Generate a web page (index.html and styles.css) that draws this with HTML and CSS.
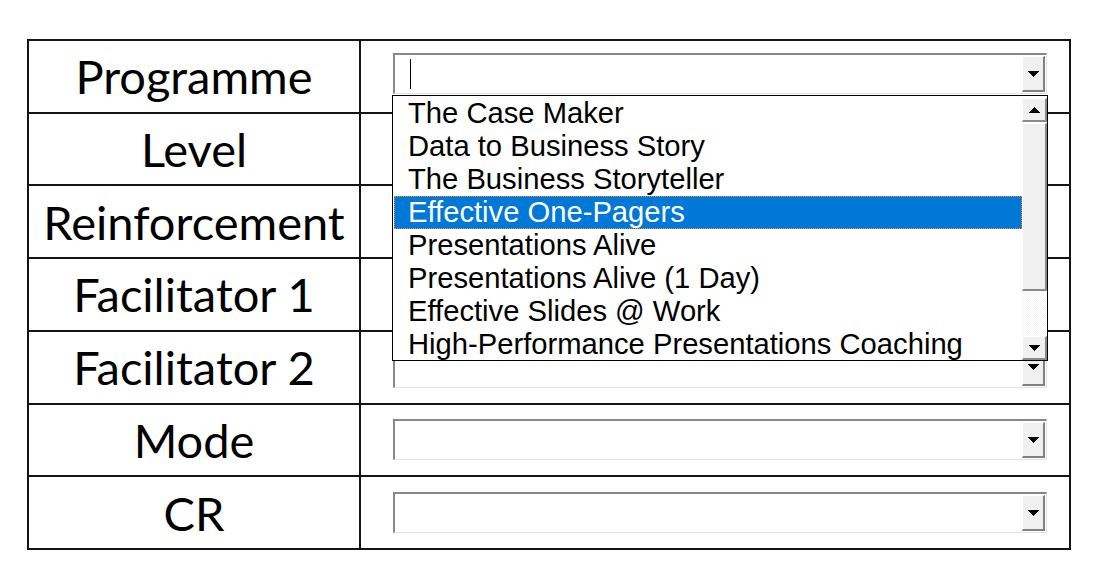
FILE: index.html
```html
<!DOCTYPE html>
<html>
	<head>
		<meta charset="utf-8">
		<title>Programme form</title>
		<link rel="stylesheet" href="styles.css">
	</head>
	<body>
		<!-- Form grid: labels left, combo boxes right -->
		<div class="form">
			<div class="label">Programme</div>
			<div class="cell first">
				<div class="combo open">
					<div class="field"><span class="caret"></span></div>
					<span class="drop-btn"><svg width="11" height="6" viewBox="0 0 11 6" shape-rendering="crispEdges"><polygon points="0,0 11,0 5.5,6" fill="#000"/></svg></span>
					<!-- Open list -->
					<div class="list">
						<div class="items">
							<div class="item">The Case Maker</div>
							<div class="item">Data to Business Story</div>
							<div class="item">The Business Storyteller</div>
							<div class="item selected">Effective One-Pagers</div>
							<div class="item">Presentations Alive</div>
							<div class="item">Presentations Alive (1 Day)</div>
							<div class="item">Effective Slides @ Work</div>
							<div class="item">High-Performance Presentations Coaching</div>
						</div>
						<div class="scrollbar">
							<span class="sb-btn"><svg width="11" height="6" viewBox="0 0 11 6" shape-rendering="crispEdges"><polygon points="0,6 11,6 5.5,0" fill="#000"/></svg></span>
							<span class="sb-thumb"></span>
							<span class="sb-track"></span>
							<span class="sb-btn"><svg width="11" height="6" viewBox="0 0 11 6" shape-rendering="crispEdges"><polygon points="0,0 11,0 5.5,6" fill="#000"/></svg></span>
						</div>
					</div>
				</div>
			</div>

			<div class="label">Level</div>
			<div class="cell">
				<div class="combo"><div class="field"></div><span class="drop-btn"><svg width="11" height="6" viewBox="0 0 11 6" shape-rendering="crispEdges"><polygon points="0,0 11,0 5.5,6" fill="#000"/></svg></span></div>
			</div>

			<div class="label">Reinforcement</div>
			<div class="cell">
				<div class="combo"><div class="field"></div><span class="drop-btn"><svg width="11" height="6" viewBox="0 0 11 6" shape-rendering="crispEdges"><polygon points="0,0 11,0 5.5,6" fill="#000"/></svg></span></div>
			</div>

			<div class="label">Facilitator 1</div>
			<div class="cell">
				<div class="combo"><div class="field"></div><span class="drop-btn"><svg width="11" height="6" viewBox="0 0 11 6" shape-rendering="crispEdges"><polygon points="0,0 11,0 5.5,6" fill="#000"/></svg></span></div>
			</div>

			<div class="label">Facilitator 2</div>
			<div class="cell">
				<div class="combo"><div class="field"></div><span class="drop-btn"><svg width="11" height="6" viewBox="0 0 11 6" shape-rendering="crispEdges"><polygon points="0,0 11,0 5.5,6" fill="#000"/></svg></span></div>
			</div>

			<div class="label">Mode</div>
			<div class="cell">
				<div class="combo"><div class="field"></div><span class="drop-btn"><svg width="11" height="6" viewBox="0 0 11 6" shape-rendering="crispEdges"><polygon points="0,0 11,0 5.5,6" fill="#000"/></svg></span></div>
			</div>

			<div class="label">CR</div>
			<div class="cell">
				<div class="combo"><div class="field"></div><span class="drop-btn"><svg width="11" height="6" viewBox="0 0 11 6" shape-rendering="crispEdges"><polygon points="0,0 11,0 5.5,6" fill="#000"/></svg></span></div>
			</div>
		</div>
	</body>
</html>
```

FILE: styles.css
```css
body {
	margin: 0;
	padding: 39px 0 0 27px;
	background: #fff;
}
/* Form grid */
.form {
	display: grid;
	grid-template-columns: 330px 708px;
	grid-template-rows: repeat(7, 1fr);
	gap: 2px;
	padding: 2px;
	width: 1040px;
	height: 507px;
	background: #151515;
}
.label {
	background: #fff;
	display: flex;
	align-items: center;
	justify-content: center;
	font-family: Lato, "Open Sans", sans-serif;
	font-size: 47px;
	color: #000;
}
.cell {
	background: #fff;
	display: flex;
	align-items: center;
	padding-left: 32px;
}
.cell.first {
	padding-bottom: 5px;
}
/* Combo box */
.combo {
	position: relative;
	display: flex;
	width: 654px;
	height: 41px;
	box-sizing: border-box;
	border-top: 2px solid #888;
	border-left: 2px solid #888;
	border-bottom: 1px solid #e3e3e3;
	border-right: 1px solid #e3e3e3;
	background: #fff;
}
.field {
	flex: 1;
	display: flex;
	align-items: center;
	padding-left: 15px;
}
.caret {
	width: 1px;
	height: 30px;
	background: #000;
}
.drop-btn {
	width: 23px;
	margin: 1px 1px 1px 0;
	box-sizing: border-box;
	display: flex;
	align-items: center;
	justify-content: center;
	background: #f0f0f0;
	border-top: 1px solid #fff;
	border-left: 1px solid #fff;
	border-right: 2px solid #808080;
	border-bottom: 2px solid #808080;
}
/* Open list */
.list {
	position: absolute;
	top: 40px;
	left: -3px;
	width: 656px;
	height: 266px;
	box-sizing: border-box;
	border: 1px solid #000;
	background: #fff;
	display: flex;
	padding-top: 1px;
	z-index: 2;
}
.items {
	flex: 1;
}
.item {
	height: 33px;
	line-height: 33px;
	padding-left: 15px;
	font-family: "Liberation Sans", Arial, sans-serif;
	font-size: 29.2px;
	color: #000;
	white-space: nowrap;
}
.item.selected {
	background: #0078d7;
	color: #fff;
	outline: 1px dotted #f08a24;
	outline-offset: -1px;
	margin-left: 1px;
	padding-left: 14px;
}
.scrollbar {
	width: 25px;
	display: flex;
	flex-direction: column;
	margin-top: 1px;
}
.sb-btn, .sb-thumb {
	box-sizing: border-box;
	background: #f0f0f0;
	border-top: 1px solid #fff;
	border-left: 1px solid #fff;
	border-right: 2px solid #8a8a8a;
	border-bottom: 2px solid #8a8a8a;
	display: flex;
	align-items: center;
	justify-content: center;
}
.sb-btn {
	height: 24px;
}
.sb-thumb {
	height: 168px;
	margin-top: 1px;
}
.sb-track {
	flex: 1;
	background: repeating-conic-gradient(#f4f4f4 0 25%, #fff 0 50%) 0 0 / 2px 2px;
}
```
